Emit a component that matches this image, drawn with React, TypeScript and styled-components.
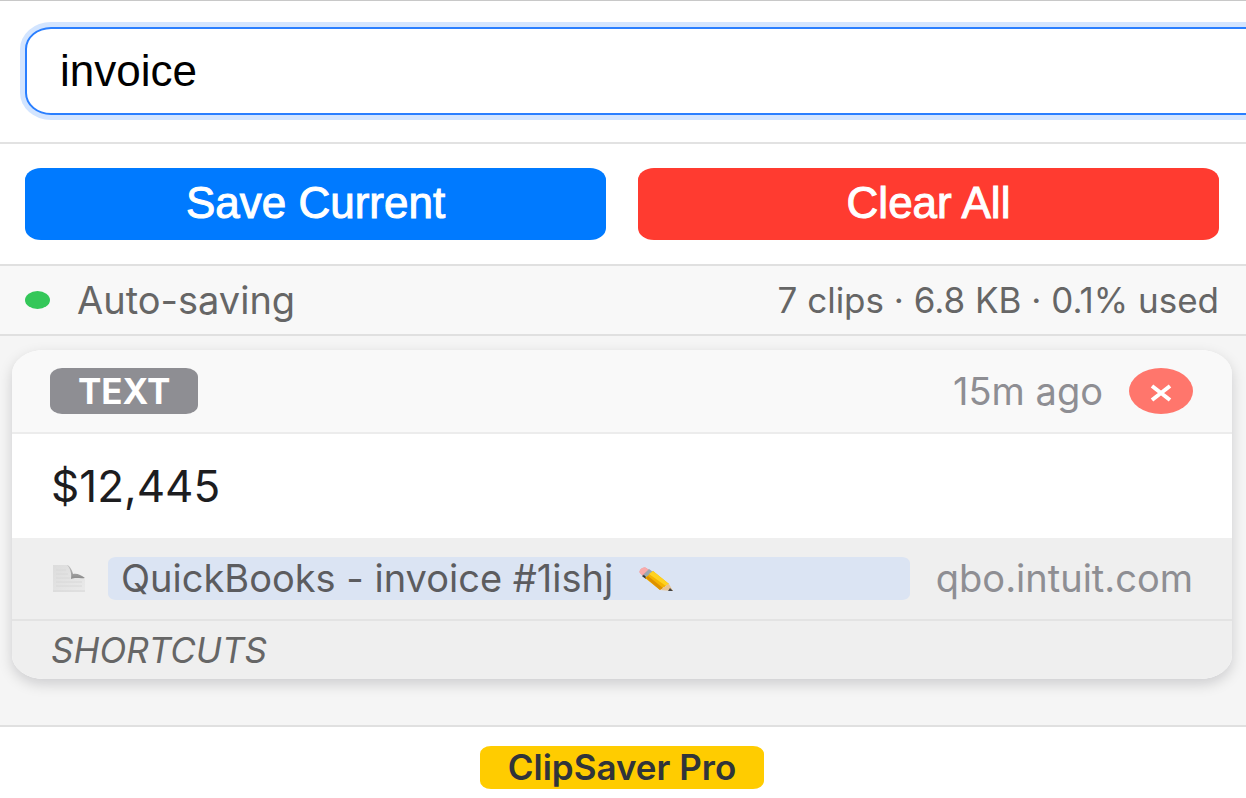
import React from 'react';
import styled, { createGlobalStyle } from 'styled-components';

const GlobalStyle = createGlobalStyle`
  *, *::before, *::after { box-sizing: border-box; }
  body {
    margin: 0;
    background: #ffffff;
    color: #1d1d1f;
    font-family: Inter, "Noto Sans", sans-serif;
  }
  button, input { font-family: "Liberation Sans", Arial, sans-serif; margin: 0; }
`;

const Popup = styled.main`
  border-top: 1px solid #c8c8c8;
  overflow-x: clip;
`;

const SearchBar = styled.div`
  padding: 26px 25px 27px;
  border-bottom: 2px solid #e2e2e2;
`;

const SearchInput = styled.input`
  display: block;
  box-sizing: content-box;
  width: 100%;
  height: 50px;
  padding: 17px 33px;
  border: 2px solid #2a7fff;
  border-radius: 26px / 22px;
  outline: none;
  background: #ffffff;
  box-shadow: 0 0 0 5px #d3e5ff;
  color: #000000;
  font-size: 44px;
  line-height: 50px;
`;

const Actions = styled.div`
  display: grid;
  grid-template-columns: 1fr 1fr;
  gap: 32px;
  padding: 24px 27px 24px 25px;
  border-bottom: 2px solid #e0e0e0;
`;

const ActionButton = styled.button<{ $color: string }>`
  height: 72px;
  padding: 0 16px 2px;
  border: 0;
  border-radius: 16px / 12px;
  background: ${(p) => p.$color};
  color: #ffffff;
  font-size: 44px;
  line-height: 48px;
  -webkit-text-stroke: 1px #ffffff;
`;

const StatusBar = styled.div`
  display: flex;
  align-items: center;
  justify-content: space-between;
  height: 70px;
  padding: 0 27px 0 25px;
  border-bottom: 2px solid #e0e0e0;
  background: #f8f8f8;
  color: #666666;
`;

const Status = styled.div`
  display: flex;
  align-items: center;
  gap: 27px;
  font-size: 38px;
  line-height: 40px;
`;

const Dot = styled.span`
  width: 25px;
  height: 18px;
  border-radius: 50%;
  background: #34c759;
`;

const Usage = styled.span`
  font-size: 35px;
  line-height: 40px;
`;

const ClipList = styled.section`
  padding: 14px 14px 46px 12px;
  border-bottom: 2px solid #e0e0e0;
  background: #f5f5f5;
`;

const Card = styled.article`
  overflow: hidden;
  border-radius: 32px / 24px;
  background: #ffffff;
  box-shadow: 0 5px 14px rgba(0, 0, 20, 0.17);
`;

const CardHeader = styled.header`
  display: flex;
  align-items: center;
  justify-content: space-between;
  height: 84px;
  padding: 0 39px 0 38px;
  border-bottom: 2px solid #ececec;
  background: #f9f9f9;
`;

const TypeTag = styled.span`
  padding: 0 28px;
  border-radius: 12px / 9px;
  background: #8e8e93;
  color: #ffffff;
  font-size: 35px;
  font-weight: 700;
  line-height: 46px;
`;

const HeaderEnd = styled.div`
  display: flex;
  align-items: center;
  gap: 26px;
  color: #8e8e93;
  font-size: 38px;
  line-height: 46px;
`;

const DeleteButton = styled.button`
  display: flex;
  align-items: center;
  justify-content: center;
  width: 64px;
  height: 46px;
  padding: 4px 0 0;
  border: 0;
  border-radius: 50%;
  background: #ff766c;
`;

const ClipText = styled.p`
  margin: 0;
  padding: 27px 39px;
  font-size: 44px;
  line-height: 50px;
`;

const Source = styled.div`
  display: flex;
  align-items: center;
  height: 83px;
  padding: 0 39px 0 38px;
  border-bottom: 2px solid #e3e3e3;
  background: #efefef;
`;

const TitleButton = styled.button`
  display: flex;
  flex: 1;
  align-items: center;
  gap: 24px;
  min-width: 0;
  height: 43px;
  margin: 0 26px 0 20px;
  padding: 0 13px;
  border: 0;
  border-radius: 8px / 6px;
  background: #dbe4f3;
  color: #5c5c5f;
  font-family: Inter, "Noto Sans", sans-serif;
  font-size: 38px;
  line-height: 43px;
  white-space: nowrap;
`;

const SourceLink = styled.a`
  color: #8e8e93;
  font-size: 38px;
  line-height: 43px;
  text-decoration: none;
`;

const Shortcuts = styled.footer`
  padding: 9px 39px;
  background: #efefef;
  color: #666666;
  font-size: 35px;
  font-style: italic;
  line-height: 40px;
`;

const Footer = styled.footer`
  display: flex;
  justify-content: center;
  padding: 19px 2px 9px 0;
`;

const ProBadge = styled.button`
  height: 43px;
  padding: 0 28px;
  border: 0;
  border-radius: 11px / 8px;
  background: #ffcc00;
  color: #30343a;
  font-family: Inter, "Noto Sans", sans-serif;
  font-size: 35px;
  font-weight: 600;
  line-height: 43px;
`;

function PageIcon() {
  return (
    <svg width="38" height="32" viewBox="0 0 38 32" aria-hidden="true">
      <defs>
        <linearGradient id="sheet" x1="0" y1="0" x2="1" y2="1">
          <stop offset="0" stopColor="#dcdcdc" />
          <stop offset="1" stopColor="#eaeaea" />
        </linearGradient>
        <linearGradient id="curl" x1="0" y1="0" x2="0" y2="1">
          <stop offset="0" stopColor="#c4c4c4" />
          <stop offset="1" stopColor="#8a8a8a" />
        </linearGradient>
      </defs>
      <path d="M3 2h15c3 3 4 6 4 10 5 0 9 1 13 4v13H3z" fill="url(#sheet)" />
      <path d="M6 7h10M6 11h12M6 15h14M6 19h26M6 23h26" stroke="#d8d8d8" />
      <path d="M17 2c3 1 5 5 6 9 4-1 8 1 12 4-5 1-9-1-14 1 1-6-1-11-4-14z" fill="url(#curl)" />
      <path d="M3 28h32" stroke="#d6d6d6" />
    </svg>
  );
}

function PencilIcon() {
  return (
    <svg width="38" height="28" viewBox="0 0 38 28" aria-hidden="true">
      <path d="M9 3l5 3-7 6-4-4c-2-2 3-7 6-5z" fill="#f28b8b" />
      <path d="M9 3l3 2-7 5-2-2C1 6 6 1 9 3z" fill="#f8aaaa" />
      <path d="M12 4l4 3-7 7-4-3z" fill="#9ba7b1" />
      <path d="M5 11l4 3 1-1-3-3z" fill="#333333" />
      <path d="M16 6l16 13-9 6L8 13z" fill="#f5b400" />
      <path d="M16 6l16 13-3 2L12 9z" fill="#ffd21f" />
      <path d="M9 13l14 12 3-2L11 11z" fill="#dd9100" />
      <path d="M32 19l4 7-13-1c2-1 3-1 3-3 2 0 3 0 3-2z" fill="#e9c391" />
      <path d="M33 23l3 3-5 0z" fill="#444444" />
    </svg>
  );
}

export default function App() {
  return (
    <>
      <GlobalStyle />
      <Popup>
        <SearchBar>
          <SearchInput type="text" aria-label="Search clips" defaultValue="invoice" />
        </SearchBar>
        <Actions>
          <ActionButton type="button" $color="#007aff">Save Current</ActionButton>
          <ActionButton type="button" $color="#ff3b30">Clear All</ActionButton>
        </Actions>
        <StatusBar>
          <Status>
            <Dot />
            <span>Auto-saving</span>
          </Status>
          <Usage>7 clips · 6.8 KB · 0.1% used</Usage>
        </StatusBar>
        <ClipList>
          <Card>
            <CardHeader>
              <TypeTag>TEXT</TypeTag>
              <HeaderEnd>
                <time>15m ago</time>
                <DeleteButton type="button" aria-label="Delete clip">
                  <svg width="22" height="18" viewBox="0 0 22 18" aria-hidden="true">
                    <path d="M2 2l18 14M20 2L2 16" stroke="#fff" strokeWidth="4" />
                  </svg>
                </DeleteButton>
              </HeaderEnd>
            </CardHeader>
            <ClipText>$12,445</ClipText>
            <Source>
              <PageIcon />
              <TitleButton type="button">
                <span>QuickBooks - invoice #1ishj</span>
                <PencilIcon />
              </TitleButton>
              <SourceLink href="#source">qbo.intuit.com</SourceLink>
            </Source>
            <Shortcuts>SHORTCUTS</Shortcuts>
          </Card>
        </ClipList>
        <Footer>
          <ProBadge type="button">ClipSaver Pro</ProBadge>
        </Footer>
      </Popup>
    </>
  );
}
